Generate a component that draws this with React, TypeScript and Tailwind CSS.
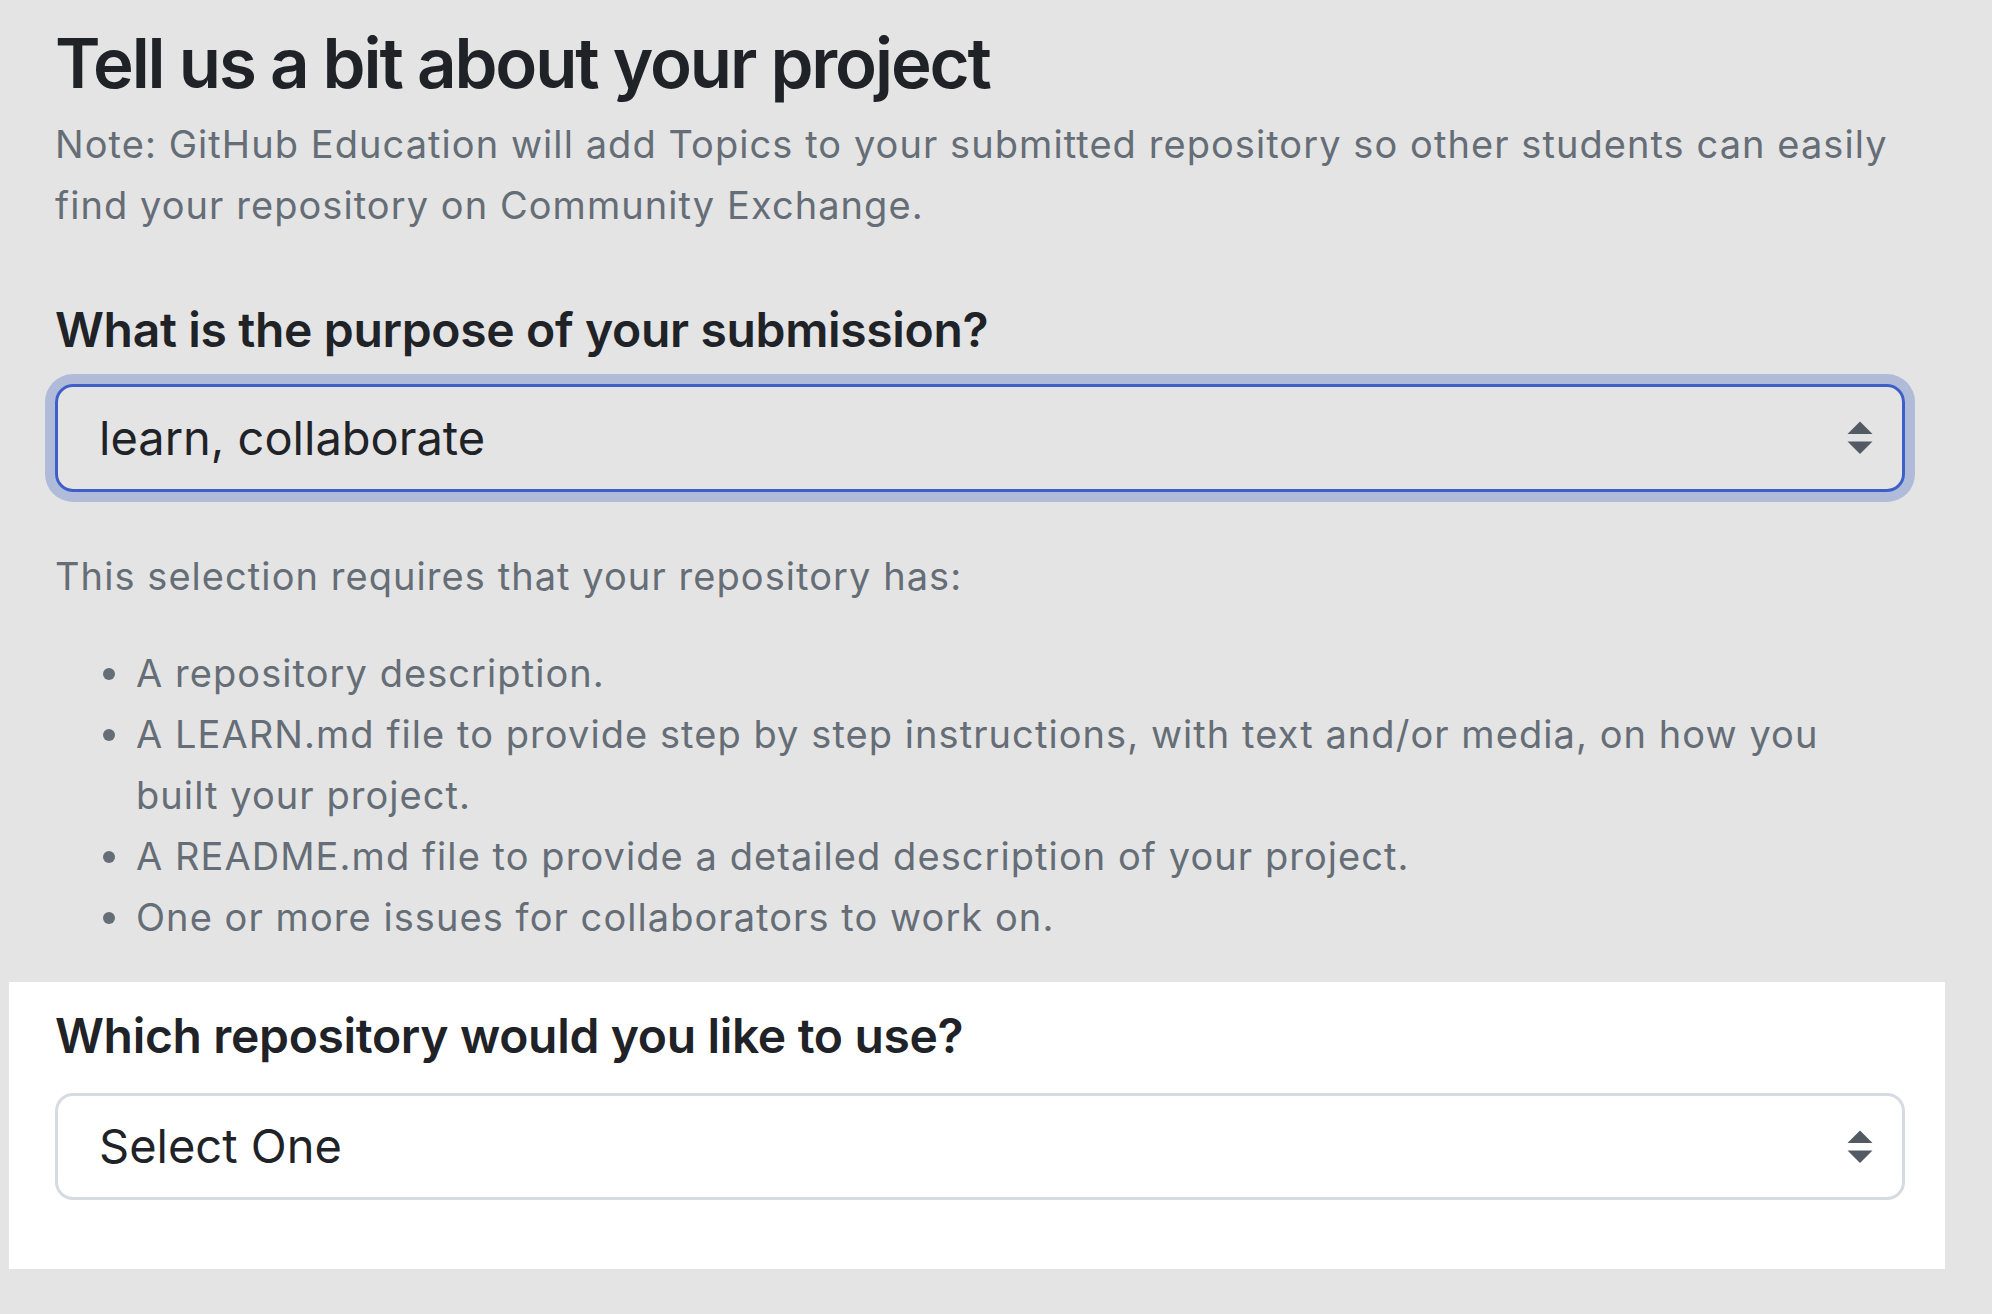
import React from "react";

function Chevrons() {
  return (
    <svg width="26" height="34" viewBox="0 0 26 34" className="shrink-0">
      <path d="M13 0.5 L25.5 13 L0.5 13 Z" fill="#535a63" strokeLinejoin="round" />
      <path d="M0.5 20.5 L25.5 20.5 L13 33 Z" fill="#535a63" strokeLinejoin="round" />
    </svg>
  );
}

function Bullet({ children }: { children: React.ReactNode }) {
  return (
    <li className="flex items-start">
      <span className="ml-[48px] mr-[21px] mt-[25px] h-[12px] w-[12px] shrink-0 rounded-full bg-[#656d76]" />
      <span>{children}</span>
    </li>
  );
}

export default function App() {
  return (
    <div
      className="min-h-[1314px] w-[1992px] bg-[#e4e4e4] text-[#1f2328]"
      style={{ fontFamily: "Inter, 'Noto Sans', 'Liberation Sans', sans-serif" }}
    >
      <div className="w-[1905px] pl-[55px] pt-[20px]">
        <h2 className="text-[69px] font-semibold leading-[86px] tracking-[-0.031em] whitespace-nowrap">
          Tell us a bit about your project
        </h2>
        <p className="mt-[8px] text-[38px] leading-[61px] tracking-[0.028em] text-[#656d76] whitespace-nowrap">
          Note: GitHub Education will add Topics to your submitted repository so other students can easily
          <br />
          find your repository on Community Exchange.
        </p>

        <label className="mt-[64px] block text-[48px] font-semibold leading-[60px] tracking-[-0.007em] whitespace-nowrap">
          What is the purpose of your submission?
        </label>
        <div className="mt-[24px] flex h-[108px] items-center justify-between rounded-[18px] border-[3px] border-[#3f5fc8] pl-[41px] pr-[29px] ring-[10px] ring-[#afbbd9]">
          <span className="text-[47px] text-[#1f2328]">learn, collaborate</span>
          <Chevrons />
        </div>

        <p className="mt-[54px] text-[38px] leading-[61px] tracking-[0.028em] text-[#656d76] whitespace-nowrap">
          This selection requires that your repository has:
        </p>
        <ul className="mt-[36px] text-[38px] leading-[61px] tracking-[0.028em] text-[#656d76] whitespace-nowrap">
          <Bullet>A repository description.</Bullet>
          <Bullet>
            A LEARN.md file to provide step by step instructions, with text and/or media, on how you
            <br />
            built your project.
          </Bullet>
          <Bullet>A README.md file to provide a detailed description of your project.</Bullet>
          <Bullet>One or more issues for collaborators to work on.</Bullet>
        </ul>
      </div>

      <div className="ml-[9px] mt-[34px] w-[1936px] bg-white pb-[69px] pl-[46px] pr-[40px] pt-[24px]">
        <label className="block text-[48px] font-semibold leading-[60px] tracking-[-0.007em] whitespace-nowrap">
          Which repository would you like to use?
        </label>
        <div className="mt-[27px] flex h-[107px] items-center justify-between rounded-[18px] border-[3px] border-[#d5dbe1] pl-[41px] pr-[29px]">
          <span className="text-[47px] text-[#1f2328]">Select One</span>
          <Chevrons />
        </div>
      </div>
    </div>
  );
}
